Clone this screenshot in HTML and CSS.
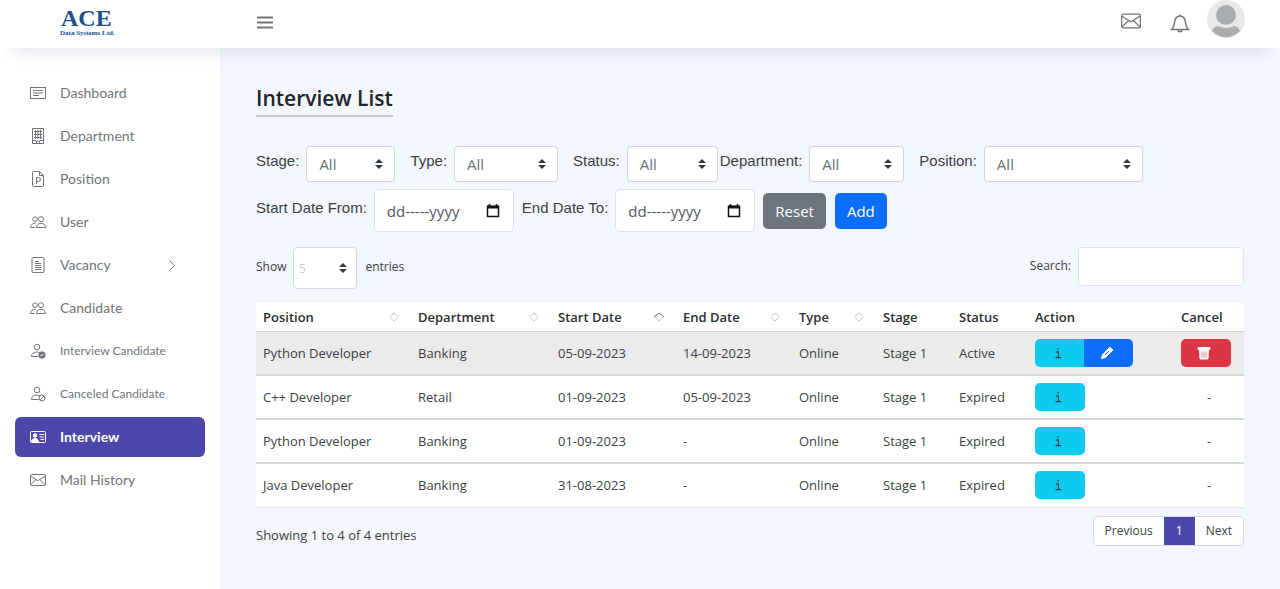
FILE: index.html
```html
<!DOCTYPE html>
<html lang="en">
<head>
<meta charset="utf-8">
<meta name="viewport" content="width=device-width, initial-scale=1">
<title>Interview List</title>
<link rel="stylesheet" href="styles.css">
</head>
<body>
<svg class="sprite" aria-hidden="true">
  <symbol id="mail" viewBox="0 0 16 16"><rect x=".5" y="2.5" width="15" height="11" rx="1.3"/><path d="M.8 4.2 8 8.6l7.2-4.4M.8 12.6l5.4-5M15.2 12.6l-5.4-5"/></symbol>
  <symbol id="people" viewBox="0 0 16 16"><circle cx="5" cy="5.2" r="2.3"/><circle cx="11" cy="5.2" r="2.5"/><path d="M6.5 13.5h9c0-2.6-1.8-4.2-4.5-4.2s-4.500 1.600-4.500 4.200zM5.500 9.300C2.500 9 .5 10.800.5 13.500h4"/></symbol>
  <symbol id="person" viewBox="0 0 16 16"><circle cx="7" cy="4" r="2.800"/><path d="M8.500 13.500h-7c0-3 2.200-4.500 5.500-4.500q2 0 3.500.8"/></symbol>
</svg>
<header class="topbar">
  <a class="brand" href="#"><span class="brand-name">ACE</span><span class="brand-sub">Data Systems Ltd.</span></a>
  <button class="icon-button menu" aria-label="Toggle menu"><svg width="16" height="16" viewBox="0 0 16 16"><path d="M0 2.500h16M0 7.500h16M0 12.500h16"/></svg></button>
  <div class="tools">
    <button class="icon-button mail" aria-label="Messages"><svg width="20" height="20"><use href="#mail"/></svg></button>
    <button class="icon-button bell" aria-label="Notifications"><svg width="20" height="20" viewBox="0 0 20 20"><path d="M1.500 16.500h17c-2-1.500-2.500-3.500-3-7C15 5.500 13 3 10 3S5 5.500 4.500 9.500c-.5 3.500-1 5.500-3 7zM10 3V1.500M8 16.500c0 3 4 3 4 0"/></svg></button>
    <button class="icon-button avatar" aria-label="Account"><svg width="38" height="38" viewBox="0 0 38 38"><circle cx="19" cy="19" r="19" fill="#e8e8e8"/><circle cx="19" cy="15" r="10" fill="#aaadaf"/><path d="M5 31q2-5 6-5 8 4 16 0 4 0 6 5a19 19 0 0 1-28 0z" fill="#aaadaf"/></svg></button>
  </div>
</header>
<div class="shell">
  <nav class="sidebar" aria-label="Main">
    <a href="#"><svg viewBox="0 0 16 16"><rect x=".5" y="2.500" width="15" height="11"/><path d="M3 5.500h10M3 8h10M3 10.500h6"/></svg>Dashboard</a>
    <a href="#"><svg viewBox="0 0 16 16"><path d="M2.500.5h11v15h-11zM6.500 15.500V13h3v2.500M4 3.500h8M4 6.500h8M4 9.500h8M5.500 2v9M8 2v9M10.500 2v9M3 12.500h3M10 12.500h3"/></svg>Department</a>
    <a href="#"><svg viewBox="0 0 16 16"><path d="M9.500.5h-6a1 1 0 0 0-1 1v13a1 1 0 0 0 1 1h9a1 1 0 0 0 1-1v-10zv4h4M6.500 13V6.500h2a2 2 0 0 1 0 4h-2"/></svg>Position</a>
    <a href="#"><svg><use href="#people"/></svg>User</a>
    <a href="#"><svg viewBox="0 0 16 16"><rect x="2" y=".5" width="12" height="15" rx="1"/><path d="M5 4.500h4M5 6.500h6M5 8.500h6M5 10.500h6M5 12.500h6"/></svg>Vacancy<svg class="chevron" viewBox="0 0 16 16"><path d="m5.500 3.500 5 5-5 5"/></svg></a>
    <a href="#"><svg><use href="#people"/></svg>Candidate</a>
    <a class="sub" href="#"><svg viewBox="0 0 16 16"><use href="#person"/><circle cx="12" cy="12" r="3.200" fill="currentColor"/><path d="m10.500 12 1 1 2-2" stroke="#fff"/></svg>Interview Candidate</a>
    <a class="sub" href="#"><svg viewBox="0 0 16 16"><use href="#person"/><circle cx="12" cy="12" r="3" /><path d="m10 14 4-4"/></svg>Canceled Candidate</a>
    <a class="active" href="#" aria-current="page"><svg viewBox="0 0 16 16"><rect x=".5" y="2.500" width="15" height="11" rx="1"/><path d="M9.500 5.500H14M9.500 8H14M10.500 10.500H14"/><circle cx="5" cy="6.500" r="1.800" fill="currentColor"/><path d="M1.500 12.500c.5-4 6.500-4 7 0z" fill="currentColor"/></svg>Interview</a>
    <a href="#"><svg><use href="#mail"/></svg>Mail History</a>
  </nav>
  <main class="content">
    <h1>Interview List</h1>
    <form class="filters">
      <div class="filter-row">
        <div class="field"><label for="stage">Stage:</label><select id="stage" class="w-stage"><option>All</option></select></div>
        <div class="field"><label for="type">Type:</label><select id="type" class="w-type"><option>All</option></select></div>
        <div class="field tight"><label for="status">Status:</label><select id="status" class="w-status"><option>All</option></select></div>
        <div class="field"><label for="dept">Department:</label><select id="dept" class="w-dept"><option>All</option></select></div>
        <div class="field"><label for="position">Position:</label><select id="position" class="w-position"><option>All</option></select></div>
      </div>
      <div class="filter-row dates">
        <div class="field"><label for="from">Start Date From:</label><div class="date"><input id="from" type="text" placeholder="dd-----yyyy"><svg viewBox="0 0 14 14"><path d="M1.500 2.500h11v10h-11z"/><path d="M1 3h12" stroke-width="3"/><path d="M3.500 0v2M10.500 0v2"/></svg></div></div>
        <div class="field"><label for="to">End Date To:</label><div class="date"><input id="to" type="text" placeholder="dd-----yyyy"><svg viewBox="0 0 14 14"><path d="M1.500 2.500h11v10h-11z"/><path d="M1 3h12" stroke-width="3"/><path d="M3.500 0v2M10.500 0v2"/></svg></div></div>
        <button class="btn reset" type="reset">Reset</button>
        <button class="btn add" type="button">Add</button>
      </div>
    </form>
    <div class="table-tools">
      <div class="field"><label for="length">Show</label><select id="length" class="w-length"><option>5</option></select><span>entries</span></div>
      <div class="field"><label for="search">Search:</label><input id="search" class="search" type="search"></div>
    </div>
    <table>
      <colgroup><col class="c-position"><col class="c-dept"><col class="c-start"><col class="c-end"><col class="c-type"><col class="c-short"><col class="c-short"><col class="c-action"><col class="c-cancel"></colgroup>
      <thead>
        <tr>
          <th><div>Position<svg class="sort" viewBox="0 0 10 10"><path d="M1 4.500 5 1l4 3.500M1 5.500 5 9l4-3.500"/></svg></div></th>
          <th><div>Department<svg class="sort" viewBox="0 0 10 10"><path d="M1 4.500 5 1l4 3.500M1 5.500 5 9l4-3.500"/></svg></div></th>
          <th aria-sort="ascending"><div>Start Date<svg class="sort" viewBox="0 0 10 10"><path d="M1 5.500 5 9l4-3.500"/><path class="on" d="M0 5 5 1l5 4"/></svg></div></th>
          <th><div>End Date<svg class="sort" viewBox="0 0 10 10"><path d="M1 4.500 5 1l4 3.500M1 5.500 5 9l4-3.500"/></svg></div></th>
          <th><div>Type<svg class="sort" viewBox="0 0 10 10"><path d="M1 4.500 5 1l4 3.500M1 5.500 5 9l4-3.500"/></svg></div></th>
          <th>Stage</th><th>Status</th><th>Action</th><th>Cancel</th>
        </tr>
      </thead>
      <tbody>
        <tr class="hovered"><td>Python Developer</td><td>Banking</td><td>05-09-2023</td><td>14-09-2023</td><td>Online</td><td>Stage 1</td><td>Active</td>
          <td><div class="group"><button class="act info" aria-label="Details"><svg viewBox="0 0 12 14"><path d="M3.500 5.500h3V12M3 12.500h7M5 2h2"/></svg></button><button class="act edit" aria-label="Edit"><svg viewBox="0 0 14 14"><path d="m1.500 12.500 1-4L10 1l3 3-7.500 7.500z" fill="#fff"/><path d="m5 9 4-4" stroke="#0d6efd"/></svg></button></div></td>
          <td><button class="act delete" aria-label="Cancel interview"><svg viewBox="0 0 14 14"><path d="M1 1.500h12v2H1z" fill="#fff"/><path d="M2.500 4h9l-.5 9H3z" fill="#fff"/><path d="M5 5.500v6M7 5.500v6M9 5.500v6" stroke="#eb8f96"/></svg></button></td></tr>
        <tr><td>C++ Developer</td><td>Retail</td><td>01-09-2023</td><td>05-09-2023</td><td>Online</td><td>Stage 1</td><td>Expired</td>
          <td><button class="act info" aria-label="Details"><svg viewBox="0 0 12 14"><path d="M3.500 5.500h3V12M3 12.500h7M5 2h2"/></svg></button></td><td class="none">-</td></tr>
        <tr><td>Python Developer</td><td>Banking</td><td>01-09-2023</td><td>-</td><td>Online</td><td>Stage 1</td><td>Expired</td>
          <td><button class="act info" aria-label="Details"><svg viewBox="0 0 12 14"><path d="M3.500 5.500h3V12M3 12.500h7M5 2h2"/></svg></button></td><td class="none">-</td></tr>
        <tr><td>Java Developer</td><td>Banking</td><td>31-08-2023</td><td>-</td><td>Online</td><td>Stage 1</td><td>Expired</td>
          <td><button class="act info" aria-label="Details"><svg viewBox="0 0 12 14"><path d="M3.500 5.500h3V12M3 12.500h7M5 2h2"/></svg></button></td><td class="none">-</td></tr>
      </tbody>
    </table>
    <div class="table-foot">
      <p>Showing 1 to 4 of 4 entries</p>
      <div class="pager"><button>Previous</button><button class="current" aria-current="page">1</button><button>Next</button></div>
    </div>
  </main>
</div>
</body>
</html>
```
FILE: styles.css
```css
* { box-sizing: border-box; }
body {
  margin: 0;
  min-height: 100vh;
  display: flex;
  flex-direction: column;
  background: #f3f6fd;
  color: #3b3f43;
  font: 13px/20px "Open Sans", "Noto Sans", sans-serif;
}
button, input, select { font: inherit; color: inherit; }
button { border: 0; padding: 0; cursor: pointer; }
a { color: inherit; text-decoration: none; }
svg { fill: none; stroke: currentColor; flex: none; }
.sprite { position: absolute; width: 0; height: 0; }

.topbar {
  display: flex;
  height: 48px;
  padding: 0 35px 0 60px;
  background: #fff;
  box-shadow: 0 16px 16px -12px rgba(80, 88, 130, .16);
  z-index: 1;
}
.brand {
  width: 197px;
  padding-top: 8px;
  color: #20508a;
  font-family: "Liberation Serif", serif;
  font-weight: 700;
}
.brand span { display: block; }
.brand-name { font-size: 24px; line-height: 21px; padding-left: 1px; }
.brand-sub { font-size: 7px; line-height: 8px; }
.icon-button { background: none; color: #707377; height: 38px; }
.icon-button svg { display: block; }
.menu { padding-top: 8px; }
.menu svg { stroke-width: 2; }
.tools { display: flex; margin-left: auto; }
.tools .mail { padding-top: 3px; }
.tools .bell { margin: 0 17px 0 29px; padding-top: 8px; }
.tools .bell svg { stroke-width: 1.5; }
.tools .avatar svg { stroke: none; }

.shell { display: flex; flex: 1; }
.sidebar {
  width: 220px;
  padding: 25px 15px;
  display: flex;
  flex-direction: column;
  gap: 3px;
  background: #fff;
  color: #71757b;
  font-family: Lato, sans-serif;
  font-size: 14px;
}
.sidebar a {
  display: flex;
  align-items: center;
  height: 40px;
  padding: 0 15px;
  border-radius: 6px;
}
.sidebar svg { width: 16px; height: 16px; margin-right: 14px; }
.sidebar .chevron { margin: 0 10px 0 auto; }
.sidebar .sub { font-size: 12px; }
.sidebar .active { background: #4d47ac; color: #fff; font-weight: 700; }

.content { flex: 1; min-width: 0; padding: 35px 36px 24px; }
h1 {
  display: table;
  margin: 0 0 29px;
  padding-bottom: 1px;
  border-bottom: 2px solid #c6c7ca;
  color: #212529;
  font-size: 21px;
  line-height: 31px;
  font-weight: 600;
}
.filter-row { display: flex; flex-wrap: wrap; gap: 8px 15px; font-size: 15px; }
.field { display: flex; align-items: center; gap: 7px; }
.field.tight { margin-right: -13px; }
.filters label {
  padding-bottom: 6px;
  font-family: "Liberation Sans", sans-serif;
  font-size: 15px;
}
select {
  appearance: none;
  height: 36px;
  padding: 0 12px;
  border: 1px solid #d3d6dc;
  border-radius: 4px;
  color: #6b7076;
  background: #fff url("data:image/svg+xml,%3Csvg xmlns='http://www.w3.org/2000/svg' viewBox='0 0 8 10'%3E%3Cpath fill='%23343a40' d='M4 0 0 4h8zM4 10 0 6h8z'/%3E%3C/svg%3E") no-repeat right 11px center / 8px 10px;
}
.w-stage { width: 89px; }
.w-type { width: 104px; }
.w-status { width: 91px; }
.w-dept { width: 95px; }
.w-position { width: 159px; }
.dates { gap: 8px; margin-top: 7px; align-items: center; }
.date {
  display: flex;
  align-items: center;
  width: 140px;
  height: 43px;
  padding: 0 13px 0 12px;
  background: #fff;
  border: 1px solid #dcdfe5;
  border-radius: 5px;
}
.date input { flex: 1; min-width: 0; padding: 0; border: 0; background: none; }
.date input::placeholder { color: #55595e; opacity: 1; }
.date svg { width: 14px; height: 14px; color: #111; stroke-width: 1.5; }
.btn { height: 36px; padding: 0 12px; border-radius: 5px; color: #fff; }
.reset { background: #6c757d; }
.add { margin-left: 1px; background: #0d6efd; }

.table-tools { display: flex; justify-content: space-between; align-items: flex-start; margin: 15px 0 14px; font-size: 12px; }
.table-tools label, .table-tools span { padding-bottom: 2px; }
.w-length { width: 64px; height: 42px; padding: 0 4px; color: #cfd1d4; font-size: 13px; background-position: right 9px center; }
.table-tools span { padding-left: 1px; }
.search { width: 166px; height: 39px; border: 1px solid #dfe2e8; border-radius: 4px; background: #fff; }

table { width: 100%; table-layout: fixed; border-collapse: collapse; background: #fff; }
.c-position { width: 155px; }
.c-dept { width: 140px; }
.c-start { width: 125px; }
.c-end { width: 116px; }
.c-type { width: 84px; }
.c-short { width: 76px; }
.c-action { width: 146px; }
.c-cancel { width: 70px; }
th, td { padding: 0 7px; text-align: left; white-space: nowrap; }
th { height: 28px; color: #2b2e32; font-weight: 600; border-bottom: 1px solid #d2d4d6; }
th div { display: flex; align-items: center; justify-content: space-between; padding-right: 5px; }
.sort { width: 10px; height: 10px; color: #c5c7c9; }
.sort .on { stroke: #63666a; }
td { height: 44px; border-bottom: 2px solid #d3d8da; }
tbody tr:last-child td { border-bottom: 1px solid #dfe1e4; }
.hovered { background: #ebebec; }
td.none { padding-left: 33px; }
.group { display: flex; }
.act { display: flex; align-items: center; justify-content: center; width: 50px; height: 28px; padding-right: 4px; border-radius: 5px; color: #fff; }
.act svg { width: 14px; height: 14px; }
.info { background: #0dcaf0; color: #2b4654; }
.act.info svg { width: 10px; height: 12px; stroke-width: 1.5; }
.edit { background: #0d6efd; }
.delete { background: #dc3545; }
.group .info { width: 49px; border-radius: 5px 0 0 5px; }
.group .edit { width: 49px; border-radius: 0 5px 5px 0; }

.table-foot { display: flex; justify-content: space-between; align-items: flex-start; padding-top: 8px; }
.table-foot p { margin: 9px 0 0; }
.pager { display: flex; border: 1px solid #d6d9de; border-radius: 5px; background: #fff; overflow: hidden; }
.pager button { height: 28px; padding: 0 11px; background: none; font-size: 12px; }
.pager .current { padding: 0 12px; background: #4d47ac; color: #fff; }
```
